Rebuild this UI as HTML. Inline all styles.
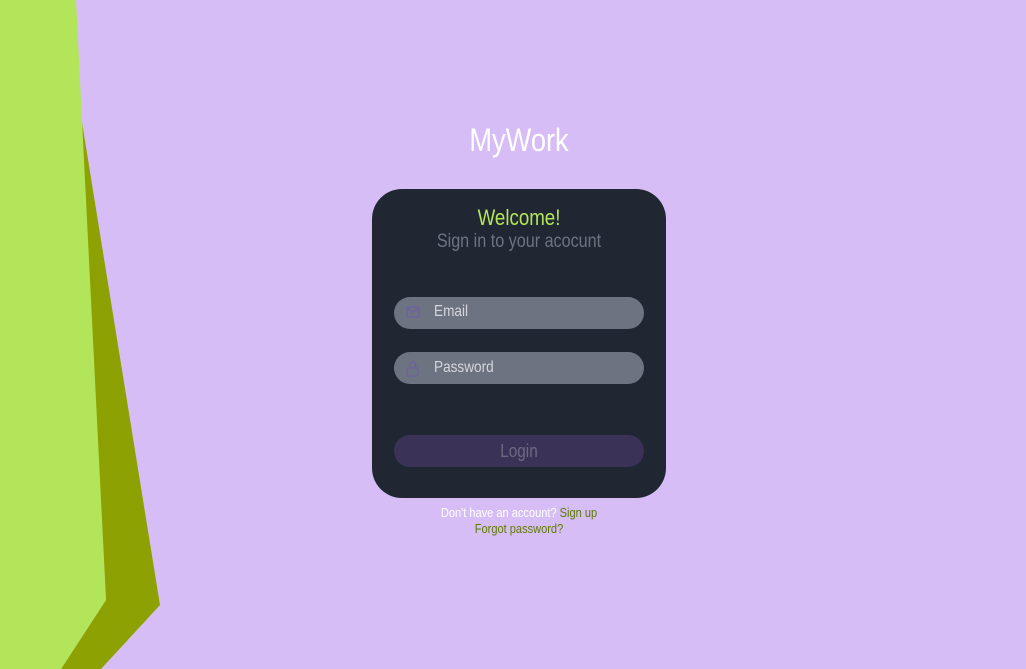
<!DOCTYPE html>
<html><head><style>
html,body{margin:0;padding:0;width:1026px;height:669px;overflow:hidden;background:#d7bdf5;font-family:"Liberation Sans Narrow","Liberation Sans",sans-serif;}
svg.bg{position:absolute;left:0;top:0}
.t{position:absolute;white-space:nowrap;transform:scaleX(0.85);transform-origin:center;}
.l{transform-origin:left center;}
.card{position:absolute;left:372px;top:189px;width:294px;height:309px;background:#202733;border-radius:30px;}
.inp{position:absolute;left:394px;width:250px;height:32px;background:#6d7380;border-radius:16px;}
</style></head><body>
<svg class="bg" width="1026" height="669">
<polygon points="80,110 160,605 101,669 61,669 106,600" fill="#8da103"/>
<polygon points="0,0 76,0 106,600 61,669 0,669" fill="#b3e55a"/>
</svg>
<div class="t" style="left:0;width:1038px;text-align:center;top:122px;font-size:32px;color:#fff;">MyWork</div>
<div class="card"></div>
<div class="t" style="left:372px;width:294px;text-align:center;top:205px;font-size:22px;color:#b3e55a;">Welcome!</div>
<div class="t" style="left:372px;width:294px;text-align:center;top:231px;font-size:19px;color:#6d7380;">Sign in to your acocunt</div>
<div class="inp" style="top:297px"></div>
<div class="inp" style="top:352px"></div>
<svg class="bg" width="1026" height="669">
<g fill="none" stroke="#6f5fa0" stroke-width="1.3">
<rect x="407" y="307" width="12" height="10" rx="1.5"/><path d="M407.5 308.5l5.5 4 5.5-4"/>
<rect x="407" y="368" width="11" height="8" rx="1.5"/><path d="M409.5 368v-3a3 3 0 0 1 6 0v3"/>
</g></svg>
<div class="t l" style="left:434px;top:303px;font-size:16px;color:#d5d7dc;">Email</div>
<div class="t l" style="left:434px;top:359px;font-size:16px;color:#d5d7dc;">Password</div>
<div class="inp" style="top:435px;background:#3b3357"></div>
<div class="t" style="left:394px;width:250px;text-align:center;top:441px;font-size:18px;color:#6d6a80;">Login</div>
<div class="t" style="left:0;width:1038px;text-align:center;top:505px;font-size:13px;color:#fff;">Don't have an account? <span style="color:#5e7a00">Sign up</span></div>
<div class="t" style="left:0;width:1038px;text-align:center;top:521px;font-size:13px;color:#5e7a00;">Forgot password?</div>
</body></html>
